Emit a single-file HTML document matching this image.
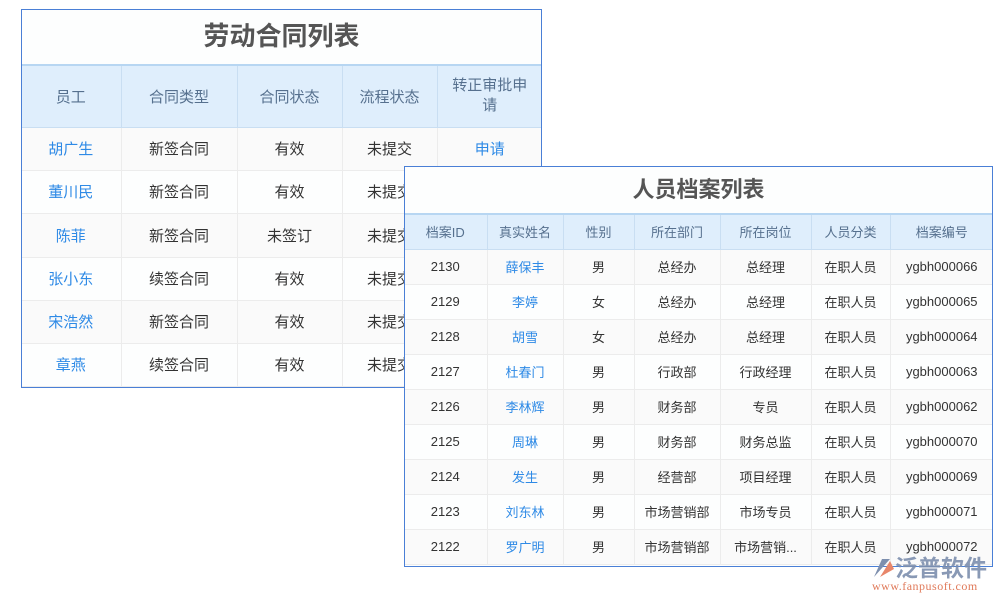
<!DOCTYPE html>
<html><head><meta charset="utf-8"><style>
*{margin:0;padding:0;box-sizing:border-box}
body{width:1000px;height:600px;background:#fff;position:relative;overflow:hidden;font-family:"Liberation Sans","Noto Sans CJK SC",sans-serif}
.box{position:absolute;background:#fdfefe;overflow:hidden}
.frame{position:absolute;border:1px solid #4a7fd6;z-index:5;pointer-events:none}
.title{position:absolute;left:0;right:0;text-align:center;font-weight:bold;color:#555}
table{position:absolute;left:0;border-collapse:collapse;table-layout:fixed}
td,th{text-align:center;border-right:1px solid #ececec;border-bottom:1px solid #ececec;color:#333;font-weight:normal;overflow:hidden;white-space:nowrap;padding:0}
th{background:#dfeefc;color:#56708e;border-right:1px solid #c9def2;border-bottom:1px solid #c9def2}
td:last-child,th:last-child{border-right:none}
.b{color:#2e8ae6}
tr:nth-child(even) td{background:#fafafa}
</style></head><body>
<div class="box" style="left:21px;top:9px;width:521px;height:379px">
<div class="title" style="top:10px;font-size:26px;line-height:34px">劳动合同列表</div>
<table style="top:55px;width:521px;font-size:15px;border-top:2px solid #b7d6f2">
<colgroup><col style="width:100px"><col style="width:116px"><col style="width:105px"><col style="width:95px"><col style="width:105px"></colgroup>
<tr style="height:62px"><th>员工</th><th>合同类型</th><th>合同状态</th><th>流程状态</th><th style="white-space:normal;line-height:20px">转正审批申<br>请</th></tr>
<tr style="height:43px"><td class="b">胡广生</td><td>新签合同</td><td>有效</td><td>未提交</td><td class="b">申请</td></tr>
<tr style="height:43px"><td class="b">董川民</td><td>新签合同</td><td>有效</td><td>未提交</td><td></td></tr>
<tr style="height:44px"><td class="b">陈菲</td><td>新签合同</td><td>未签订</td><td>未提交</td><td></td></tr>
<tr style="height:43px"><td class="b">张小东</td><td>续签合同</td><td>有效</td><td>未提交</td><td></td></tr>
<tr style="height:43px"><td class="b">宋浩然</td><td>新签合同</td><td>有效</td><td>未提交</td><td></td></tr>
<tr style="height:43px"><td class="b">章燕</td><td>续签合同</td><td>有效</td><td>未提交</td><td></td></tr>
</table></div>
<div class="frame" style="left:21px;top:9px;width:521px;height:379px"></div>
<div class="box" style="left:404px;top:166px;width:589px;height:401px;z-index:6">
<div class="title" style="top:9px;font-size:22px;line-height:30px">人员档案列表</div>
<table style="top:47px;width:589px;font-size:13px;border-top:2px solid #b7d6f2">
<colgroup><col style="width:83px"><col style="width:76px"><col style="width:71px"><col style="width:86px"><col style="width:91px"><col style="width:79px"><col style="width:103px"></colgroup>
<tr style="height:35px"><th>档案ID</th><th>真实姓名</th><th>性别</th><th>所在部门</th><th>所在岗位</th><th>人员分类</th><th>档案编号</th></tr>
<tr style="height:35px"><td>2130</td><td class="b">薛保丰</td><td>男</td><td>总经办</td><td>总经理</td><td>在职人员</td><td>ygbh000066</td></tr>
<tr style="height:35px"><td>2129</td><td class="b">李婷</td><td>女</td><td>总经办</td><td>总经理</td><td>在职人员</td><td>ygbh000065</td></tr>
<tr style="height:35px"><td>2128</td><td class="b">胡雪</td><td>女</td><td>总经办</td><td>总经理</td><td>在职人员</td><td>ygbh000064</td></tr>
<tr style="height:35px"><td>2127</td><td class="b">杜春门</td><td>男</td><td>行政部</td><td>行政经理</td><td>在职人员</td><td>ygbh000063</td></tr>
<tr style="height:35px"><td>2126</td><td class="b">李林辉</td><td>男</td><td>财务部</td><td>专员</td><td>在职人员</td><td>ygbh000062</td></tr>
<tr style="height:35px"><td>2125</td><td class="b">周琳</td><td>男</td><td>财务部</td><td>财务总监</td><td>在职人员</td><td>ygbh000070</td></tr>
<tr style="height:35px"><td>2124</td><td class="b">发生</td><td>男</td><td>经营部</td><td>项目经理</td><td>在职人员</td><td>ygbh000069</td></tr>
<tr style="height:35px"><td>2123</td><td class="b">刘东林</td><td>男</td><td>市场营销部</td><td>市场专员</td><td>在职人员</td><td>ygbh000071</td></tr>
<tr style="height:35px"><td>2122</td><td class="b">罗广明</td><td>男</td><td>市场营销部</td><td>市场营销...</td><td>在职人员</td><td>ygbh000072</td></tr>
</table></div>
<div class="frame" style="left:404px;top:166px;width:589px;height:401px;z-index:7"></div>
<svg style="position:absolute;left:870px;top:555px;z-index:9" width="26" height="26" viewBox="0 0 26 26"><path d="M4 22 L12 4 L20 4 Z" fill="#7d8fae"/><path d="M10 22 L20 6 L24 14 Z" fill="#e8866a"/></svg>
<div style="position:absolute;left:895px;top:552px;z-index:9;font-size:23px;line-height:28px;color:#7d8fae;font-weight:bold;font-family:'Noto Sans CJK SC',sans-serif;opacity:.9">泛普软件</div>
<div style="position:absolute;left:872px;top:579px;z-index:9;font-size:12px;line-height:14px;color:#e07a5a;font-family:'Liberation Serif',serif;letter-spacing:.5px">www.fanpusoft.com</div>
</body></html>
